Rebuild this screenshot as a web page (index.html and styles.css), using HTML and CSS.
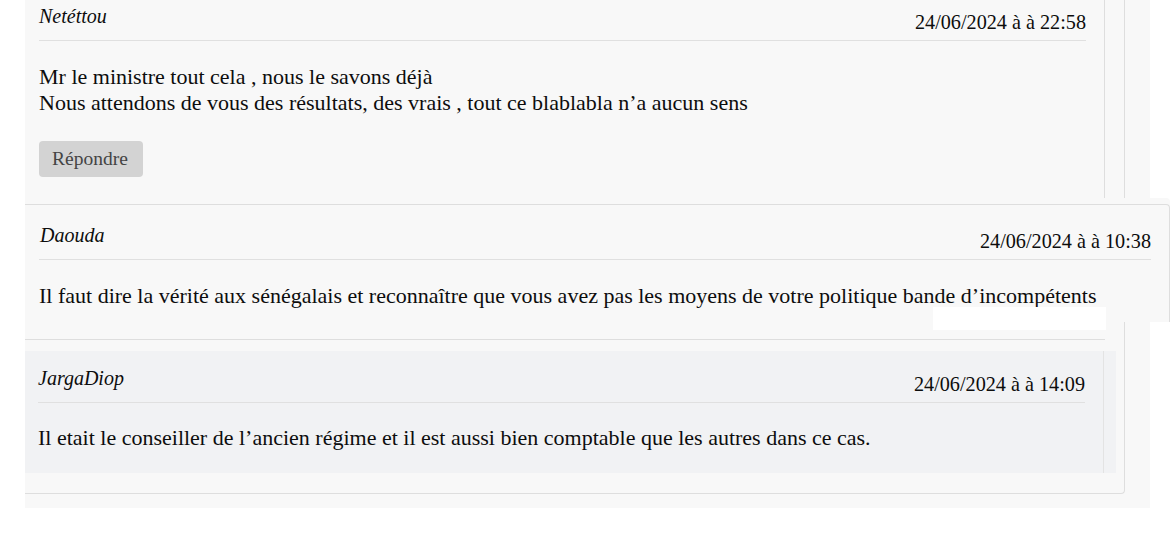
FILE: index.html
```html
<!DOCTYPE html>
<html lang="fr">
<head>
<meta charset="utf-8">
<title>Commentaires</title>
<link rel="stylesheet" href="styles.css">
</head>
<body>
<div class="page">
  <div class="card">
    <div class="thread">
      <div class="comment first">
        <div class="comment-head">
          <span class="author">Netéttou</span>
          <span class="date">24/06/2024 à à 22:58</span>
        </div>
        <div class="comment-body">Mr le ministre tout cela , nous le savons déjà<br>Nous attendons de vous des résultats, des vrais , tout ce blablabla n’a aucun sens</div>
        <button class="reply" type="button">Répondre</button>
      </div>
      <div class="comment wide">
        <div class="comment-head">
          <span class="author">Daouda</span>
          <span class="date">24/06/2024 à à 10:38</span>
        </div>
        <div class="comment-body">Il faut dire la vérité aux sénégalais et reconnaître que vous avez pas les moyens de votre politique bande d’incompétents</div>
        <div class="glitch"></div>
      </div>
    </div>
    <div class="shaded">
      <div class="comment inner">
        <div class="comment-head">
          <span class="author">JargaDiop</span>
          <span class="date">24/06/2024 à à 14:09</span>
        </div>
        <div class="comment-body">Il etait le conseiller de l’ancien régime et il est aussi bien comptable que les autres dans ce cas.</div>
      </div>
    </div>
  </div>
</div>
</body>
</html>
```

FILE: styles.css
```css
html, body {
  margin: 0;
  padding: 0;
  background: #ffffff;
}

body {
  font-family: "Liberation Serif", "Times New Roman", serif;
  color: #0d0d0d;
}

.page {
  margin-left: 25px;
  width: 1125px;
  background: #f8f8f8;
  padding-bottom: 14px;
}

.card {
  width: 1099px;
  border-right: 1px solid #dedede;
  border-bottom: 1px solid #dedede;
  border-bottom-right-radius: 4px;
  padding-bottom: 20px;
}

.thread {
  width: 1080px;
  border-bottom: 1px solid #dedede;
  padding-bottom: 17px;
}

.comment {
  box-sizing: border-box;
}

.comment-head {
  display: flex;
  justify-content: space-between;
  align-items: flex-start;
  border-bottom: 1px solid #e0e0e0;
  padding-bottom: 6px;
}

.author {
  font-style: italic;
  font-size: 20px;
  line-height: 24px;
}

.date {
  font-size: 20.2px;
  line-height: 24px;
  margin-top: 6px;
}

.comment-body {
  font-size: 22px;
  line-height: 25.5px;
  margin-top: 23px;
}

.first {
  width: 1080px;
  padding: 4px 18px 21px 14px;
  border-right: 1px solid #dedede;
}

.reply {
  display: block;
  margin-top: 26px;
  height: 36px;
  padding: 0 15px 0 13px;
  border: none;
  border-radius: 4px;
  background: #d3d3d3;
  color: #444444;
  font-family: "Liberation Serif", "Times New Roman", serif;
  font-size: 19.5px;
}

.wide {
  position: relative;
  width: 1145px;
  margin-top: 6px;
  padding: 18px 18px 13px 14px;
  background: #f8f8f8;
  border-top: 1px solid #dedede;
  border-right: 1px solid #dedede;
  border-top-right-radius: 4px;
  box-shadow: 0 -6px 0 #f8f8f8;
}

.wide .author {
  margin-left: 1px;
}

.glitch {
  position: absolute;
  left: 908px;
  top: 102px;
  width: 173px;
  height: 23px;
  background: #ffffff;
}

.shaded {
  margin-top: 11px;
  width: 1079px;
  padding-right: 12px;
  background: #f1f2f4;
}

.inner {
  border-right: 1px solid #e3e3e3;
  padding: 15px 18px 23px 13px;
}

.inner .comment-body {
  margin-top: 22px;
}
```
